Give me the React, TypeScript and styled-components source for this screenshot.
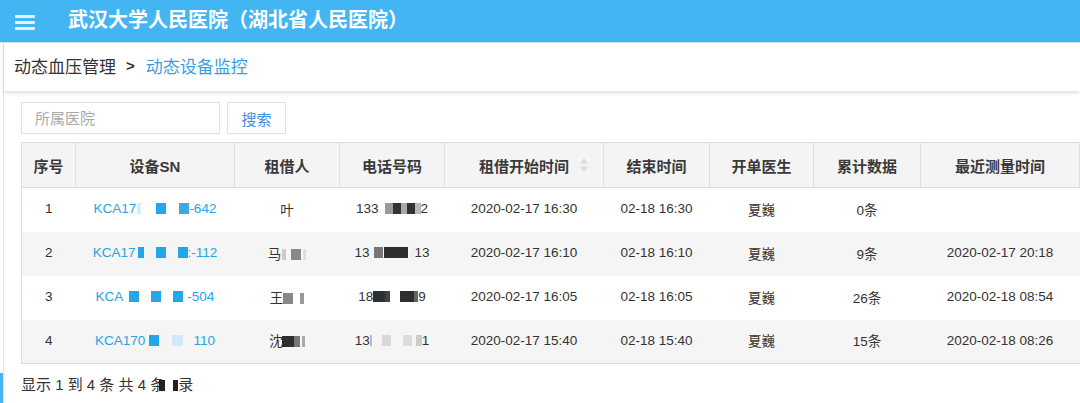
import { FC, Fragment } from 'react';
import styled, { createGlobalStyle } from 'styled-components';

const GlobalStyle = createGlobalStyle`
  html, body {
    margin: 0;
    padding: 0;
    background: #fff;
    overflow: hidden;
  }
  body {
    font-family: "Liberation Sans", "Noto Sans CJK SC", sans-serif;
    color: #333;
  }
`;

const Page = styled.div`
  display: flex;
  flex-direction: column;
  width: 1080px;
  height: 403px;
  overflow: hidden;
`;

const TopBar = styled.header`
  display: flex;
  align-items: center;
  height: 42px;
  flex-shrink: 0;
  padding-left: 15px;
  background: #42b5f2;
  border-bottom: 1px solid #cfe3f0;
`;

const Burger = styled.div`
  display: flex;
  flex-direction: column;
  gap: 3px;
  width: 20px;
  margin-top: 2px;

  span {
    height: 3px;
    background: #e3f3fd;
    border-radius: 1px;
  }
`;

const Title = styled.h1`
  margin: 0 0 5px 33px;
  font-size: 20px;
  font-weight: 700;
  color: #fff;
`;

const Body = styled.div`
  display: flex;
  flex: 1;
  min-height: 0;
`;

const Rail = styled.aside`
  display: flex;
  flex-direction: column;
  width: 3px;
  flex-shrink: 0;
  padding-top: 330px;
  border-right: 1px solid #e4e4e4;
`;

const RailMark = styled.div`
  height: 40px;
  background: #42b5f2;
`;

const Main = styled.main`
  flex: 1;
  min-width: 0;
  display: flex;
  flex-direction: column;
`;

const Crumbs = styled.nav`
  display: flex;
  align-items: center;
  gap: 10px;
  height: 48px;
  flex-shrink: 0;
  padding-left: 10px;
  font-size: 17px;
  background: #fff;
  box-shadow: 0 2px 4px rgba(0, 0, 0, 0.13);
  position: relative;
  z-index: 1;
`;

const Crumb = styled.span<{ $active?: boolean }>`
  color: ${(p) => (p.$active ? '#3d9de2' : '#333')};
  margin-top: -3px;
`;

const Sep = styled.span`
  font-weight: 700;
  font-size: 15px;
  color: #333;
  margin: -3px 1px 0 0;
`;

const Content = styled.section`
  flex: 1;
  padding: 11px 0 0 17px;
  background: #fff;
`;

const SearchRow = styled.div`
  display: flex;
  gap: 7px;
`;

const Input = styled.input`
  width: 199px;
  height: 32px;
  box-sizing: border-box;
  padding: 0 13px;
  border: 1px solid #e2e2e2;
  font-family: inherit;
  font-size: 15px;
  color: #333;
  outline: none;

  &::placeholder {
    color: #aaa;
  }
`;

const Button = styled.button`
  width: 59px;
  height: 32px;
  box-sizing: border-box;
  border: 1px solid #e2e2e2;
  background: #fff;
  font-family: inherit;
  font-size: 15px;
  color: #3d8ee2;
`;

const Table = styled.table`
  margin-top: 8px;
  width: 1059px;
  border-collapse: collapse;
  table-layout: fixed;
  border: 1px solid #dcdcdc;
  border-right: none;
`;

const Th = styled.th<{ $w?: number }>`
  position: relative;
  width: ${(p) => (p.$w ? `${p.$w}px` : 'auto')};
  height: 44px;
  padding: 0;
  background: #f4f4f4;
  border-right: 1px solid #e0e0e0;
  border-bottom: 1px solid #dcdcdc;
  font-size: 15px;
  font-weight: 700;
  color: #3a3a3a;
`;

const SortIcon = styled.svg`
  position: absolute;
  right: 15px;
  top: 50%;
  margin-top: -7px;
`;

const Tr = styled.tr<{ $striped: boolean }>`
  height: 44px;
  background: ${(p) => (p.$striped ? '#f5f5f5' : '#fff')};
`;

const Td = styled.td`
  padding: 0 0 2px;
  text-align: center;
  font-size: 13.5px;
  color: #333;
  white-space: nowrap;
`;

const Link = styled.span`
  color: #2aa3e0;
`;

const Mask = styled.span<{ $c: string; $w: number; $gap?: number }>`
  display: inline-block;
  width: ${(p) => p.$w}px;
  height: 11px;
  margin-left: ${(p) => p.$gap ?? 0}px;
  background: ${(p) => p.$c};
  vertical-align: -1px;
`;

const Footer = styled.div`
  margin-top: 9px;
  font-size: 15px;
  color: #333;
`;

type Seg = string | { c: string; w: number; g?: number };

interface IRow {
  sn: Seg[];
  name: Seg[];
  phone: Seg[];
  start: string;
  end: string;
  doctor: string;
  count: string;
  last: string;
}

const BLUE = '#22a8e8';

const rows: IRow[] = [
  {
    sn: ['KCA17', { c: '#d6eefa', w: 4, g: 1 }, { c: BLUE, w: 10, g: 15 }, { c: '#3aa9e4', w: 10, g: 13 }, '-642'],
    name: ['叶'],
    phone: ['133', { c: '#999', w: 8, g: 6 }, { c: '#333', w: 8 }, { c: '#aaa', w: 6 }, { c: '#333', w: 8 }, { c: '#bbb', w: 6 }, '2'],
    start: '2020-02-17 16:30',
    end: '02-18 16:30',
    doctor: '夏巍',
    count: '0条',
    last: '',
  },
  {
    sn: ['KCA17', { c: BLUE, w: 6, g: 2 }, { c: BLUE, w: 10, g: 12 }, { c: BLUE, w: 10, g: 12 }, ':-112'],
    name: ['马', { c: '#ccc', w: 4, g: 1 }, { c: '#888', w: 10, g: 5 }, { c: '#ddd', w: 3, g: 2 }],
    phone: ['13', { c: '#777', w: 9, g: 4 }, { c: '#2f2f2f', w: 24, g: 1 }, { c: '#eee', w: 4, g: 3 }, '13'],
    start: '2020-02-17 16:10',
    end: '02-18 16:10',
    doctor: '夏巍',
    count: '9条',
    last: '2020-02-17 20:18',
  },
  {
    sn: ['KCA', { c: BLUE, w: 10, g: 6 }, { c: BLUE, w: 10, g: 12 }, { c: BLUE, w: 10, g: 12 }, { c: '#fff', w: 2, g: 2 }, '-504'],
    name: ['王', { c: '#888', w: 10 }, { c: '#999', w: 4, g: 7 }],
    phone: ['18', { c: '#2f2f2f', w: 12 }, { c: '#444', w: 5 }, { c: '#2f2f2f', w: 14, g: 10 }, { c: '#666', w: 4 }, '9'],
    start: '2020-02-17 16:05',
    end: '02-18 16:05',
    doctor: '夏巍',
    count: '26条',
    last: '2020-02-18 08:54',
  },
  {
    sn: ['KCA170', { c: BLUE, w: 10, g: 4 }, { c: '#cfe9f6', w: 11, g: 13 }, { c: '#f5f5f5', w: 10 }, '110'],
    name: ['沈', { c: '#2f2f2f', w: 12, g: -1 }, { c: '#777', w: 6 }, { c: '#aaa', w: 3, g: 2 }],
    phone: ['13', { c: '#bbb', w: 2 }, { c: '#d8d8d8', w: 9, g: 10 }, { c: '#dcdcdc', w: 9, g: 12 }, { c: '#ccc', w: 6, g: 4 }, '1'],
    start: '2020-02-17 15:40',
    end: '02-18 15:40',
    doctor: '夏巍',
    count: '15条',
    last: '2020-02-18 08:26',
  },
];

const columns: { title: string; w?: number; sortable?: boolean }[] = [
  { title: '序号', w: 53 },
  { title: '设备SN', w: 158 },
  { title: '租借人', w: 104 },
  { title: '电话号码', w: 104 },
  { title: '租借开始时间', w: 158, sortable: true },
  { title: '结束时间', w: 105 },
  { title: '开单医生', w: 103 },
  { title: '累计数据', w: 106 },
  { title: '最近测量时间' },
];

const Segments: FC<{ parts: Seg[] }> = ({ parts }) => (
  <Fragment>
    {parts.map((p, i) =>
      typeof p === 'string' ? (
        <Fragment key={i}>{p}</Fragment>
      ) : (
        <Mask key={i} $c={p.c} $w={p.w} $gap={p.g} />
      ),
    )}
  </Fragment>
);

const App: FC = () => (
  <Page>
    <GlobalStyle />
    <TopBar>
      <Burger>
        <span />
        <span />
        <span />
      </Burger>
      <Title>武汉大学人民医院（湖北省人民医院）</Title>
    </TopBar>
    <Body>
      <Rail>
        <RailMark />
      </Rail>
      <Main>
        <Crumbs>
          <Crumb>动态血压管理</Crumb>
          <Sep>&gt;</Sep>
          <Crumb $active>动态设备监控</Crumb>
        </Crumbs>
        <Content>
          <SearchRow>
            <Input placeholder="所属医院" />
            <Button>搜索</Button>
          </SearchRow>
          <Table>
            <thead>
              <tr>
                {columns.map((col) => (
                  <Th key={col.title} $w={col.w}>
                    {col.title}
                    {col.sortable && (
                      <SortIcon width="8" height="14" viewBox="0 0 8 14">
                        <path d="M4 0 L8 5.5 H0 Z" fill="#dedede" />
                        <path d="M4 14 L8 8.5 H0 Z" fill="#dedede" />
                      </SortIcon>
                    )}
                  </Th>
                ))}
              </tr>
            </thead>
            <tbody>
              {rows.map((row, i) => (
                <Tr key={i} $striped={i % 2 === 1}>
                  <Td>{i + 1}</Td>
                  <Td>
                    <Link>
                      <Segments parts={row.sn} />
                    </Link>
                  </Td>
                  <Td>
                    <Segments parts={row.name} />
                  </Td>
                  <Td>
                    <Segments parts={row.phone} />
                  </Td>
                  <Td>{row.start}</Td>
                  <Td>{row.end}</Td>
                  <Td>{row.doctor}</Td>
                  <Td>{row.count}</Td>
                  <Td>{row.last}</Td>
                </Tr>
              ))}
            </tbody>
          </Table>
          <Footer>
            显示 1 到 4 条 共 4 条
            <Mask $c="#222" $w={6} $gap={-6} />
            <Mask $c="#222" $w={5} $gap={8} />录
          </Footer>
        </Content>
      </Main>
    </Body>
  </Page>
);

export default App;
